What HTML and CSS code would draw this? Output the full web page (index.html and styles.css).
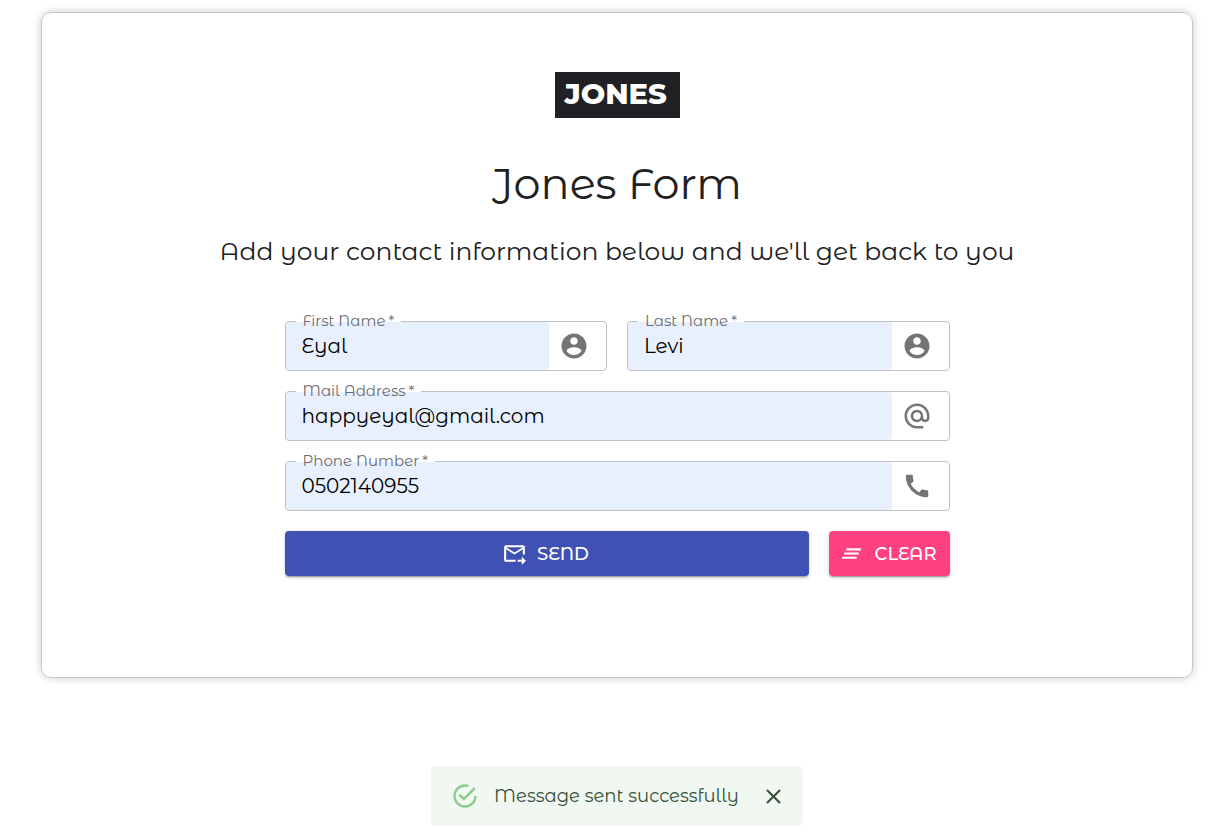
FILE: index.html
```html
<!DOCTYPE html>
<html lang="en">
<head>
<meta charset="utf-8">
<meta name="viewport" content="width=device-width, initial-scale=1">
<title>Jones Form</title>
<link rel="stylesheet" href="styles.css">
</head>
<body>
<main class="card">
  <div class="logo">JONES</div>
  <h1 class="title">Jones Form</h1>
  <p class="subtitle">Add your contact information below and we'll get back to you</p>
  <form class="form">
    <div class="row">
      <div class="field">
        <label class="label" for="first">First Name<span class="star">*</span></label>
        <input class="input" id="first" type="text" value="Eyal">
        <svg class="adornment" viewBox="0 0 24 24"><path d="M12 2C6.48 2 2 6.48 2 12s4.48 10 10 10 10-4.48 10-10S17.52 2 12 2zm0 3c1.66 0 3 1.34 3 3s-1.34 3-3 3-3-1.34-3-3 1.34-3 3-3zm0 14.2c-2.5 0-4.71-1.28-6-3.22.03-1.99 4-3.08 6-3.08 1.99 0 5.97 1.09 6 3.08-1.29 1.94-3.5 3.22-6 3.22z"/></svg>
      </div>
      <div class="field">
        <label class="label" for="last">Last Name<span class="star">*</span></label>
        <input class="input" id="last" type="text" value="Levi">
        <svg class="adornment" viewBox="0 0 24 24"><path d="M12 2C6.48 2 2 6.48 2 12s4.48 10 10 10 10-4.48 10-10S17.52 2 12 2zm0 3c1.66 0 3 1.34 3 3s-1.34 3-3 3-3-1.34-3-3 1.34-3 3-3zm0 14.2c-2.5 0-4.71-1.28-6-3.22.03-1.99 4-3.08 6-3.08 1.99 0 5.97 1.09 6 3.08-1.29 1.94-3.5 3.22-6 3.22z"/></svg>
      </div>
    </div>
    <div class="field">
      <label class="label" for="mail">Mail Address<span class="star">*</span></label>
      <input class="input" id="mail" type="email" value="happyeyal@gmail.com">
      <svg class="adornment" viewBox="0 0 24 24"><path d="M12 1.95c-5.52 0-10 4.48-10 10s4.48 10 10 10h5v-2h-5c-4.34 0-8-3.66-8-8s3.66-8 8-8 8 3.66 8 8v1.43c0 .79-.71 1.57-1.5 1.57s-1.5-.78-1.5-1.57v-1.43c0-2.76-2.24-5-5-5s-5 2.24-5 5 2.24 5 5 5c1.38 0 2.64-.56 3.54-1.47.65.89 1.77 1.47 2.96 1.47 1.97 0 3.5-1.6 3.5-3.57v-1.43c0-5.52-4.48-10-10-10zm0 13c-1.66 0-3-1.34-3-3s1.34-3 3-3 3 1.34 3 3-1.34 3-3 3z"/></svg>
    </div>
    <div class="field">
      <label class="label" for="phone">Phone Number<span class="star">*</span></label>
      <input class="input" id="phone" type="tel" value="0502140955">
      <svg class="adornment" viewBox="0 0 24 24"><path d="M20.01 15.38c-1.23 0-2.42-.2-3.53-.56-.35-.12-.74-.03-1.01.24l-1.57 1.97c-2.83-1.35-5.48-3.9-6.89-6.83l1.95-1.66c.27-.28.35-.67.24-1.02-.37-1.11-.56-2.3-.56-3.53 0-.54-.45-.99-.99-.99H4.19C3.65 3 3 3.24 3 3.99 3 13.28 10.73 21 20.01 21c.71 0 .99-.63.99-1.18v-3.45c0-.54-.45-.99-.99-.99z"/></svg>
    </div>
    <div class="actions">
      <button class="button send" type="button">
        <svg class="icon" viewBox="0 0 24 24"><path d="M20 4H4c-1.100 0-2 .9-2 2v12c0 1.100.9 2 2 2h9v-2H4V8l8 5 8-5v5h2V6c0-1.100-.9-2-2-2zm-8 7L4 6h16l-8 5zm7 4 4 4-4 4v-3h-4v-2h4v-3z"/></svg>
        SEND
      </button>
      <button class="button clear" type="button">
        <svg class="icon" viewBox="0 0 24 24"><path d="M5 13h14v-2H5v2zm-2 4h14v-2H3v2zM7 7v2h14V7H7z"/></svg>
        CLEAR
      </button>
    </div>
  </form>
</main>
<div class="snackbar">
  <div class="toast" role="status">
    <svg class="check" viewBox="0 0 24 24"><path d="M20 12a8 8 0 0 1-8 8 8 8 0 0 1-8-8 8 8 0 0 1 8-8c.76 0 1.500.11 2.200.31l1.570-1.570A9.822 9.822 0 0 0 12 2 10 10 0 0 0 2 12a10 10 0 0 0 10 10 10 10 0 0 0 10-10M7.910 10.080 6.500 11.500 11 16 21 6l-1.410-1.420L11 13.170l-3.090-3.090z"/></svg>
    <span>Message sent successfully</span>
    <button class="close" type="button" aria-label="Close">
      <svg class="icon" viewBox="0 0 24 24"><path d="M19 6.410 17.590 5 12 10.590 6.410 5 5 6.410 10.590 12 5 17.590 6.410 19 12 13.410 17.590 19 19 17.590 13.410 12z"/></svg>
    </button>
  </div>
</div>
</body>
</html>
```
FILE: styles.css
```css
* {
  box-sizing: border-box;
}

body {
  margin: 0;
  padding: 12px 32px 20px 41px;
  background: #fff;
  color: #212121;
  font-family: "Montserrat Alternates", Inter, sans-serif;
}

svg {
  display: block;
  flex: none;
  fill: currentColor;
}

.card {
  display: flex;
  flex-direction: column;
  align-items: center;
  padding: 59px 20px 101px;
  border: 1px solid #c8c8c8;
  border-radius: 10px;
  box-shadow: 0 0 10px rgba(0, 0, 0, 0.2);
}

.logo {
  width: 125px;
  padding: 0 10px 2px;
  background: #202124;
  color: #fff;
  font-family: Montserrat, Inter, sans-serif;
  font-size: 29px;
  font-weight: 800;
  line-height: 44px;
}

.title {
  margin: 36px 0 0;
  font-size: 43px;
  font-weight: 400;
  line-height: 60px;
}

.subtitle {
  margin: 21px 0 0;
  font-size: 25px;
  font-weight: 400;
  line-height: 32px;
  text-align: center;
}

.form {
  display: flex;
  flex-direction: column;
  gap: 20px;
  width: 100%;
  max-width: 665px;
  margin-top: 54px;
}

.row {
  display: grid;
  grid-template-columns: 1fr 1fr;
  gap: 20px;
}

.field {
  position: relative;
  display: flex;
  align-items: center;
  min-width: 0;
  height: 50px;
  padding-right: 17px;
  border: 1px solid #bfc1c5;
  border-radius: 4px;
}

.label {
  position: absolute;
  top: -10px;
  left: 10px;
  padding: 0 7px;
  background: linear-gradient(#fff 10px, #e8f0fe 10px);
  color: #6b6d72;
  font-size: 15px;
  line-height: 18px;
}

.star {
  margin-left: 3px;
}

.input {
  flex: 1;
  min-width: 0;
  height: 100%;
  margin-right: 10px;
  padding: 0 16px;
  border: 0;
  border-radius: 4px;
  outline: 0;
  background: #e8f0fe;
  color: #000;
  font: inherit;
  font-size: 20px;
}

.adornment {
  width: 30px;
  height: 30px;
  color: #757575;
}

.actions {
  display: flex;
  gap: 20px;
}

.button {
  display: flex;
  align-items: center;
  justify-content: center;
  gap: 10px;
  height: 45px;
  padding: 0 2px 0 0;
  border: 0;
  border-radius: 4px;
  box-shadow: 0 3px 1px -2px rgba(0, 0, 0, 0.2), 0 2px 2px rgba(0, 0, 0, 0.14), 0 1px 5px rgba(0, 0, 0, 0.12);
  color: #fff;
  font: inherit;
  font-size: 18px;
  font-weight: 500;
}

.send {
  flex: 1;
  background: #3f51b5;
}

.clear {
  width: 121px;
  background: #ff4081;
}

.icon {
  width: 25px;
  height: 25px;
}

.snackbar {
  position: fixed;
  right: 32px;
  bottom: 6px;
  left: 41px;
  display: flex;
  justify-content: center;
}

.toast {
  display: flex;
  align-items: center;
  width: 372px;
  height: 60px;
  padding: 0 17px 0 20px;
  border-radius: 5px;
  background: #f1f8f2;
  color: #375239;
  font-size: 18px;
  white-space: nowrap;
}

.check {
  width: 28px;
  height: 28px;
  margin-right: 15px;
  color: #8bcb8e;
}

.close {
  margin-left: auto;
  padding: 0;
  border: 0;
  background: none;
  color: inherit;
}
```
